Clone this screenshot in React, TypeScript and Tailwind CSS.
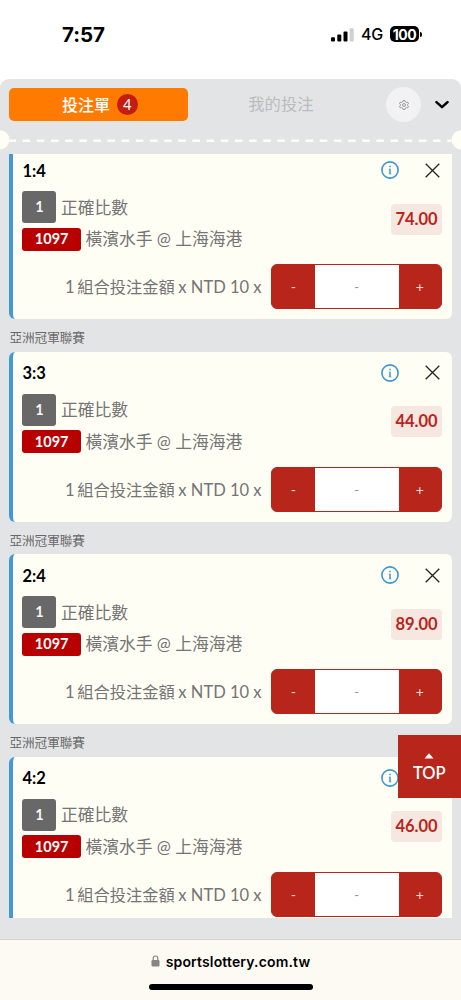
import React from 'react';

const LEAGUE = '亞洲冠軍聯賽';

const bets = [
  { score: '1:4', odds: '74.00' },
  { score: '3:3', odds: '44.00' },
  { score: '2:4', odds: '89.00' },
  { score: '4:2', odds: '46.00' },
];

function StatusBar() {
  return (
    <header className="flex h-[79px] shrink-0 items-start justify-between bg-white pr-[39px] pl-[62px] font-['Inter','Liberation_Sans',sans-serif] text-black">
      <span className="pt-[22px] text-[20.5px] leading-[26px] font-bold tracking-[-0.1px]">7:57</span>
      <div className="flex items-center pt-[24px]">
        <svg width="24" height="15" viewBox="0 0 24 15" fill="#000">
          <rect x="0" y="10.2" width="4" height="4.300" rx="1" />
          <rect x="6.300" y="7.500" width="4" height="7" rx="1" />
          <rect x="12.500" y="4.500" width="4" height="10" rx="1" />
          <rect x="18.700" y="1.300" width="4" height="13.200" rx="1" fill="#cfcfcf" />
        </svg>
        <span className="ml-[6px] w-[23px] text-[16px] leading-[20px] font-medium tracking-[-0.2px]">4G</span>
        <span className="ml-[6px] flex h-[16px] w-[29px] items-center justify-center rounded-[5px] bg-black text-[14px] font-bold tracking-[-0.4px] text-white">100</span>
        <span className="ml-px h-[5px] w-[2px] rounded-r-full bg-black" />
      </div>
    </header>
  );
}

function Tabs() {
  return (
    <div className="flex h-[51px] shrink-0 items-center pl-[9.400px]">
      <button className="flex h-[33px] w-[179px] items-center justify-center gap-[7px] rounded-[5px] bg-[#ff7a00] pl-[2px] text-[16px] font-medium text-white">
        <span className="leading-[20px]">投注單</span>
        <span className="flex size-[21px] items-center justify-center rounded-full bg-[#c51c12] text-[15px] leading-none font-normal">4</span>
      </button>
      <button className="w-[185px] text-center text-[16.300px] font-normal text-[#bbbbbd]">我的投注</button>
      <button className="ml-[13px] flex size-[35px] shrink-0 items-center justify-center rounded-full bg-[#f2f2f4]">
        <svg width="10" height="10" viewBox="0 0 24 24" fill="none" stroke="#8c8c8e" strokeWidth="2">
          <path d="M9.5 1.5h5l.7 3 2.2 1.3 3-1 2.3 4.2-2.3 2v2l2.3 2-2.3 4.2-3-1-2.2 1.3-.7 3h-5l-.7-3-2.2-1.3-3 1L1.300 15l2.300-2v-2l-2.300-2 2.300-4.200 3 1 2.200-1.300z" />
          <circle cx="12" cy="12" r="3.500" />
        </svg>
      </button>
      <svg className="ml-[14px] shrink-0" width="14" height="9" viewBox="0 0 14 9" fill="none" stroke="#000" strokeWidth="2.500" strokeLinecap="round" strokeLinejoin="round">
        <path d="M1.500 2.200 7 7.200l5.500-5" />
      </svg>
    </div>
  );
}

function Perforation() {
  return (
    <svg className="block h-[24px] w-full shrink-0" viewBox="0 0 461 24" fill="#fffef4">
      <circle cx="0" cy="9.700" r="9.500" />
      <circle cx="461" cy="9.700" r="9.500" />
      <path d="M8.500 10.800h443" stroke="#fffef4" strokeWidth="2.600" strokeDasharray="7.500 6.650" />
    </svg>
  );
}

function Stepper() {
  return (
    <div className="flex h-[45px] w-[171px] items-stretch overflow-hidden rounded-[6px] border border-[#b7251b] bg-[#b7251b] text-[14px] text-[#f8dcd9]">
      <button className="w-[42.500px]">-</button>
      <span className="flex flex-1 items-center justify-center bg-white text-[#999]">-</span>
      <button className="w-[42.500px]">+</button>
    </div>
  );
}

function BetCard({ score, odds }: { score: string; odds: string }) {
  return (
    <article className="flex h-[170px] flex-col rounded-[6px] border-l-4 border-[#4499d3] bg-[#fffef5] pr-[9.500px] pl-[9px] text-[16.800px] text-[#747474]">
      <div className="flex h-[42px] items-center">
        <h2 className="flex-1 pt-[2px] text-[16.500px] font-bold text-black">{score}</h2>
        <svg className="mr-[26px]" width="18" height="18" viewBox="0 0 18 18" fill="none" stroke="#3d95d2">
          <circle cx="9" cy="9" r="8.100" strokeWidth="1.600" />
          <path d="M9 4.800v1.500M9 7.800v5.200" strokeWidth="1.500" />
          <path d="M7.800 8.100H9M7.600 12.900h2.800" strokeWidth=".6" />
        </svg>
        <svg className="mr-[2px]" width="15" height="15" viewBox="0 0 15 15" fill="none" stroke="#222" strokeWidth="1.300">
          <path d="m.7.700 13.600 13.600M14.300.7.700 14.300" />
        </svg>
      </div>
      <div className="flex h-[60px] justify-between">
        <div>
          <div className="flex items-center gap-[4.500px]">
            <span className="flex h-[32px] w-[34px] items-center justify-center rounded-[3px] bg-[#686868] text-[14.500px] font-bold text-[#f5f5f5]">1</span>
            <span className="pt-px leading-[20px]">正確比數</span>
          </div>
          <div className="mt-[4.500px] flex h-[23px] items-center gap-[4.500px]">
            <span className="flex h-[23px] w-[58.500px] items-center justify-center rounded-[3px] bg-[#b90000] text-[14.500px] font-bold text-white">1097</span>
            <span className="leading-[20px]">橫濱水手 @ 上海海港</span>
          </div>
        </div>
        <span className="mt-[12.500px] flex h-[31px] w-[51px] items-center justify-center rounded-[4px] bg-[#f7e7e1] text-[16.500px] font-bold text-[#b7251b]">{odds}</span>
      </div>
      <div className="mt-[13px] flex items-center justify-end gap-[9.500px]">
        <span className="pt-px text-[16.500px] leading-[20px] whitespace-nowrap"><span className="mr-[2.500px]">1</span><span className="text-[16.300px]">組合投注金額</span><span className="ml-[3.500px]">x NTD 10 x</span></span>
        <Stepper />
      </div>
    </article>
  );
}

export default function App() {
  return (
    <div className="flex h-[1000px] w-[461px] flex-col overflow-hidden bg-white font-['Lato','Noto_Sans_CJK_TC',sans-serif]">
      <StatusBar />
      <main className="flex h-[860px] shrink-0 flex-col rounded-t-[9px] bg-[#e3e4e6]">
        <Tabs />
        <Perforation />
        <section className="mr-[9.500px] ml-[9.400px] h-[764px] overflow-hidden">
          <div className="-mt-[4.900px]">
            {bets.map((bet, i) => (
              <React.Fragment key={bet.score}>
                {i > 0 && <p className="h-[32.500px] pt-[9px] text-[12.600px] leading-[20px] text-[#686868]">{LEAGUE}</p>}
                <BetCard {...bet} />
              </React.Fragment>
            ))}
          </div>
        </section>
      </main>
      <footer className="flex h-[61px] shrink-0 flex-col items-center border-t border-[#d5d4d0] bg-[#fdfaf3]">
        <div className="mt-[11px] flex h-[20px] items-center gap-[6px]">
          <svg width="9" height="12" viewBox="0 0 9 12" fill="#858585">
            <rect x="0.500" y="5" width="8" height="6.500" rx="1.200" />
            <path d="M2.200 5.500V3.300a2.300 2.300 0 0 1 4.600 0v2.200" fill="none" stroke="#858585" strokeWidth="1.200" />
          </svg>
          <span className="font-['Inter','Liberation_Sans',sans-serif] text-[14px] font-semibold tracking-[0.150px] text-black">sportslottery.com.tw</span>
        </div>
        <div className="mt-[13px] h-[6px] w-[164px] rounded-full bg-black" />
      </footer>
      <button className="fixed top-[735px] left-[397.500px] flex h-[63px] w-[63.500px] flex-col items-center bg-[#b7251b] pt-[18px] text-[16.500px] leading-[20px] font-semibold text-white">
        <svg width="10" height="6" viewBox="0 0 10 6" fill="#fff"><path d="M5 .3 9.500 5.500h-9z" /></svg>
        <span className="mt-[4px]">TOP</span>
      </button>
    </div>
  );
}
